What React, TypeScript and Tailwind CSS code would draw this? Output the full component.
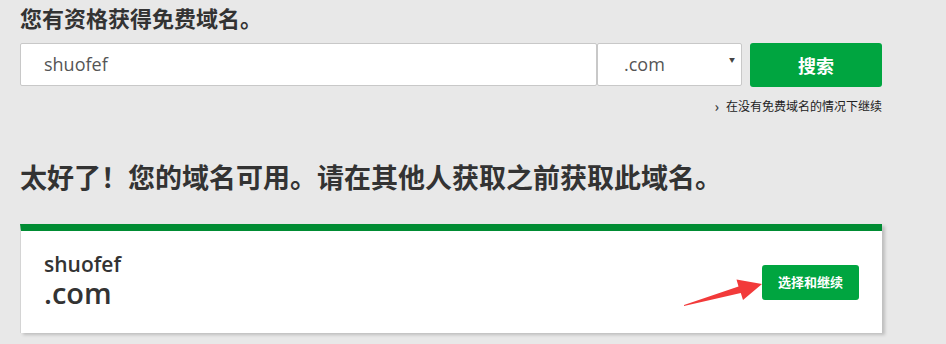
import React from 'react';

const cjk = { fontFamily: '"Noto Sans CJK SC", "Open Sans", sans-serif' };
const latin = { fontFamily: '"Open Sans", "Noto Sans CJK SC", sans-serif' };

function RedArrow() {
  return (
    <svg width="90" height="45" viewBox="0 0 90 45" className="absolute left-[-86px] top-[0px]">
      <polygon points="8,40 62.5,21.5 60.5,14.5 86,19 67,35 64.8,28 8,41" fill="#f23a3a" />
    </svg>
  );
}

export default function App() {
  return (
    <div className="w-[946px] h-[344px] bg-[#e8e8e8] overflow-hidden" style={cjk}>
      <div className="w-[862px] ml-[20px]">
        {/* Search */}
        <h1 className="pt-[3px] text-[22px] leading-[28px] font-bold text-[#333]">您有资格获得免费域名。</h1>

        <div className="mt-[12px] flex">
          <div className="w-[577px] h-[43px] bg-white border border-[#c8c8c8] rounded-[2px] flex items-center pl-[23px] text-[18px] text-[#555]" style={latin}>
            shuofef
          </div>
          <div className="w-[145px] h-[43px] bg-white border border-[#c8c8c8] rounded-[2px] flex items-center pl-[26px] relative text-[18px] text-[#555]" style={latin}>
            .com
            <span className="absolute right-[6px] top-[13px] text-[6px] leading-[6px] text-[#444]">▼</span>
          </div>
          <button className="ml-[8px] w-[132px] h-[44px] bg-[#00a540] rounded-[3px] text-white text-[18px] font-bold">搜索</button>
        </div>

        <div className="mt-[11px] flex justify-end items-center text-[12px] text-[#222] leading-[16px]">
          <span className="mr-[7px] text-[14px] font-bold text-[#444]">›</span>
          在没有免费域名的情况下继续
        </div>

        {/* Result */}
        <h2 className="mt-[45px] text-[27px] leading-[36px] font-bold text-[#333]">太好了！您的域名可用。请在其他人获取之前获取此域名。</h2>

        <div className="mt-[29px] bg-white border-t-[7px] border-[#008c33] border-l border-l-[#d4d4d4] h-[109px] shadow-[3px_2px_3px_rgba(0,0,0,0.18)] flex items-center justify-between pl-[23px] pr-[23px]">
          <div className="text-[#333] pb-[2px]" style={latin}>
            <div className="text-[21px] font-semibold leading-[24px]">shuofef</div>
            <div className="text-[29px] font-semibold leading-[34px]">.com</div>
          </div>
          <div className="relative">
            <RedArrow />
            <button className="w-[97px] h-[35px] bg-[#00a540] rounded-[3px] text-white text-[13px] font-bold">选择和继续</button>
          </div>
        </div>
      </div>
    </div>
  );
}
